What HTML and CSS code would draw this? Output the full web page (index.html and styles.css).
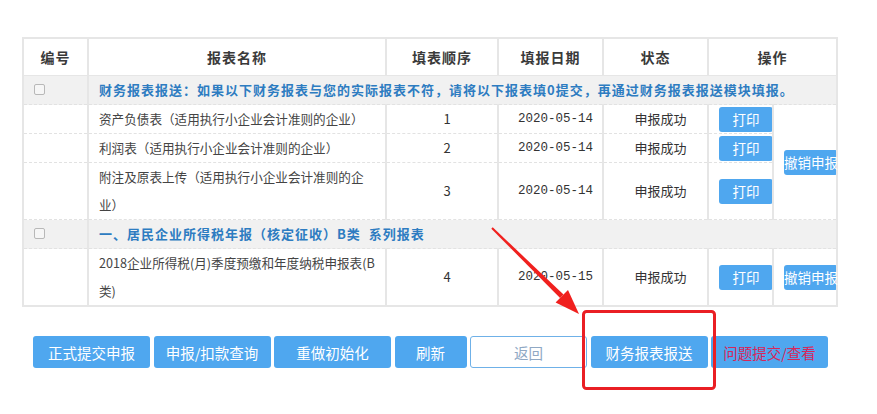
FILE: index.html
```html
<!DOCTYPE html>
<html lang="zh-CN">

<head>
    <meta charset="UTF-8">
    <title>申报表列表</title>
    <link rel="stylesheet" href="styles.css">
</head>

<body>
    <div class="page">
        <table class="report-table">
            <colgroup>
                <col class="c-no">
                <col class="c-name">
                <col class="c-order">
                <col class="c-date">
                <col class="c-state">
                <col class="c-print">
                <col class="c-cancel">
            </colgroup>
            <thead>
                <tr>
                    <th>编号</th>
                    <th>报表名称</th>
                    <th>填表顺序</th>
                    <th>填报日期</th>
                    <th>状态</th>
                    <th colspan="2">操作</th>
                </tr>
            </thead>
            <tbody>
                <tr class="group">
                    <td class="chk"><span class="box"></span></td>
                    <td colspan="6">财务报表报送：如果以下财务报表与您的实际报表不符，请将以下报表填0提交，再通过财务报表报送模块填报。</td>
                </tr>
                <tr>
                    <td></td>
                    <td class="name">资产负债表（适用执行小企业会计准则的企业）</td>
                    <td class="mid">1</td>
                    <td class="mid date">2020-05-14</td>
                    <td class="mid">申报成功</td>
                    <td class="op"><button class="mini">打印</button></td>
                    <td class="op" rowspan="3"><button class="mini">撤销申报</button></td>
                </tr>
                <tr>
                    <td></td>
                    <td class="name">利润表（适用执行小企业会计准则的企业）</td>
                    <td class="mid">2</td>
                    <td class="mid date">2020-05-14</td>
                    <td class="mid">申报成功</td>
                    <td class="op"><button class="mini">打印</button></td>
                </tr>
                <tr class="tall">
                    <td></td>
                    <td class="name">附注及原表上传（适用执行小企业会计准则的企业）</td>
                    <td class="mid">3</td>
                    <td class="mid date">2020-05-14</td>
                    <td class="mid">申报成功</td>
                    <td class="op"><button class="mini">打印</button></td>
                </tr>
                <tr class="group">
                    <td class="chk"><span class="box"></span></td>
                    <td colspan="6">一、居民企业所得税年报（核定征收）B类&nbsp;&nbsp;系列报表</td>
                </tr>
                <tr class="tall">
                    <td></td>
                    <td class="name">2018企业所得税(月)季度预缴和年度纳税申报表(B类)</td>
                    <td class="mid">4</td>
                    <td class="mid date">2020-05-15</td>
                    <td class="mid">申报成功</td>
                    <td class="op"><button class="mini">打印</button></td>
                    <td class="op"><button class="mini">撤销申报</button></td>
                </tr>
            </tbody>
        </table>

        <div class="actions">
            <button class="btn">正式提交申报</button>
            <button class="btn">申报/扣款查询</button>
            <button class="btn">重做初始化</button>
            <button class="btn btn-small">刷新</button>
            <button class="btn btn-plain">返回</button>
            <button class="btn">财务报表报送</button>
            <button class="btn btn-red">问题提交/查看</button>
        </div>
    </div>

    <!-- 标注：箭头和红框 -->
    <svg class="mark" width="877" height="414" viewBox="0 0 877 414">
        <polygon points="492.7,227.3 563.5,294.4 560.1,298.0 491.3,228.7" fill="#f0201e" />
        <polygon points="579,314 555.6,302.5 568.0,289.9" fill="#f0201e" />
        <rect x="583.5" y="311.5" width="131" height="77" rx="3" fill="none" stroke="#ea1f24" stroke-width="3" />
    </svg>
</body>

</html>
```

FILE: styles.css
```css
/* 页面 */
body {
    margin: 0;
    background: #fff;
    font-family: "Noto Sans CJK SC", "Liberation Sans", sans-serif;
    color: #333;
}

.page {
    padding: 37px 0 0 22px;
}

/* 报表表格 */
.report-table {
    width: 814px;
    table-layout: fixed;
    border-collapse: collapse;
    border: 2px solid #e6e6e6;
    font-size: 13px;
}

.c-no { width: 65px; }
.c-name { width: 298px; }
.c-order { width: 112px; }
.c-date { width: 105px; }
.c-state { width: 105px; }
.c-print { width: 65px; }
.c-cancel { width: 64px; }

.report-table th {
    height: 36px;
    padding: 0;
    font-size: 14px;
    font-weight: bold;
    letter-spacing: 1px;
    color: #3a3a3a;
    border-right: 2px solid #e6e6e6;
    border-bottom: 1px solid #e6e6e6;
}

.report-table td {
    height: 28px;
    padding: 0;
    line-height: 28px;
    border-right: 2px solid #e6e6e6;
    border-bottom: 1px dashed #e2e2e2;
    vertical-align: middle;
}

.report-table tr.tall td {
    height: 56px;
}

.report-table td.name {
    padding: 0 8px 0 10px;
    font-size: 12.6px;
    color: #444;
    word-break: break-all;
}

.report-table td.mid {
    padding-left: 10px;
    text-align: center;
    color: #333;
}

.report-table td.date {
    font-family: "Liberation Mono", monospace;
    font-size: 12.5px;
}

.report-table td.op {
    padding-left: 10px;
}

/* 分组行 */
.group td {
    background: #f1f1f1;
    color: #2d7cc1;
    font-weight: bold;
    letter-spacing: 1px;
    padding-left: 10px;
    border-right: none;
}

.group td.chk {
    padding-left: 10px;
    border-right: 2px solid #e6e6e6;
}

.box {
    display: inline-block;
    width: 9px;
    height: 9px;
    border: 1px solid #b8b8b8;
    border-radius: 2px;
    background: #f6f6f6;
    vertical-align: middle;
    margin-top: -3px;
}

/* 表内小按钮 */
.mini {
    display: block;
    width: 54px;
    height: 25px;
    padding: 0;
    border: none;
    border-radius: 3px;
    background: #4fa7ef;
    color: #fff;
    font-family: "Noto Sans CJK SC", sans-serif;
    font-size: 13.5px;
    line-height: 25px;
    white-space: nowrap;
    overflow: visible;
    text-align: center;
    cursor: pointer;
}

/* 底部按钮 */
.actions {
    display: flex;
    gap: 3.5px;
    margin: 29px 0 0 11px;
}

.btn {
    width: 117px;
    height: 32px;
    padding: 0;
    border: none;
    border-radius: 3px;
    background: #4fa7ef;
    color: #fff;
    font-family: "Noto Sans CJK SC", sans-serif;
    font-size: 14.5px;
    cursor: pointer;
}

.btn-small {
    width: 72px;
}

.btn-plain {
    background: #fff;
    border: 1px solid #6fb1e8;
    color: #8fa8c4;
}

.btn-red {
    color: #d8255a;
}

.mark {
    position: absolute;
    left: 0;
    top: 0;
    pointer-events: none;
}
```
